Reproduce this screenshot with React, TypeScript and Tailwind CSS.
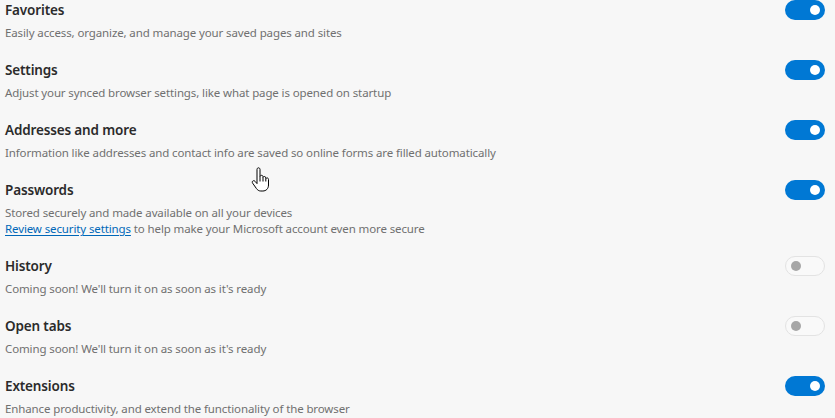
import React from "react";

type Row = { title: string; desc: string; on: boolean; link?: boolean };

const rows: Row[] = [
  { title: "Favorites", desc: "Easily access, organize, and manage your saved pages and sites", on: true },
  { title: "Settings", desc: "Adjust your synced browser settings, like what page is opened on startup", on: true },
  { title: "Addresses and more", desc: "Information like addresses and contact info are saved so online forms are filled automatically", on: true },
  { title: "Passwords", desc: "Stored securely and made available on all your devices", on: true, link: true },
  { title: "History", desc: "Coming soon! We'll turn it on as soon as it's ready", on: false },
  { title: "Open tabs", desc: "Coming soon! We'll turn it on as soon as it's ready", on: false },
  { title: "Extensions", desc: "Enhance productivity, and extend the functionality of the browser", on: true },
];

function Toggle({ on }: { on: boolean }) {
  if (on) {
    return (
      <div className="w-[40px] h-[20px] rounded-full bg-[#0078d4] flex items-center justify-end pr-[5px] shrink-0">
        <div className="w-[10px] h-[10px] rounded-full bg-white" />
      </div>
    );
  }
  return (
    <div className="w-[40px] h-[20px] rounded-full border border-[#e3e3e3] bg-[#f9f9f9] flex items-center pl-[5px] shrink-0">
      <div className="w-[10px] h-[10px] rounded-full bg-[#a6a6a6]" />
    </div>
  );
}

export default function App() {
  return (
    <div
      className="relative w-[835px] h-[418px] bg-[#f7f7f7] overflow-hidden"
      style={{ fontFamily: '"Noto Sans", "Open Sans", sans-serif' }}
    >
      <div className="flex flex-col pl-[5px] pr-[10px]">
        {rows.map((r) => (
          <div key={r.title} className="flex justify-between items-start pb-[19px]">
            <div className="flex flex-col">
              <div className="text-[13.5px] leading-[20px] font-semibold tracking-[-0.15px] text-[#2b2b2b]">{r.title}</div>
              <div className="mt-[5px] text-[11.5px] leading-[16px] tracking-[-0.12px] text-[#707070]">{r.desc}</div>
              {r.link && (
                <div className="text-[11.5px] leading-[16px] tracking-[-0.12px] text-[#707070]">
                  <span className="text-[#0067b8] underline underline-offset-2">Review security settings</span> to help make your Microsoft account even more secure
                </div>
              )}
            </div>
            <Toggle on={r.on} />
          </div>
        ))}
      </div>
      <svg
        className="absolute left-[251px] top-[167px]"
        width="20"
        height="27"
        viewBox="0 0 20 27"
      >
        <path
          d="M6 2.5c0-1 .7-1.7 1.5-1.7S9 1.5 9 2.5v7c.3-.8 1-1.2 1.6-1.2.8 0 1.4.6 1.4 1.5v.6c.3-.6.8-.9 1.4-.9.8 0 1.4.6 1.4 1.4v.8c.3-.5.8-.8 1.3-.8.8 0 1.4.7 1.4 1.5v5.6c0 3.6-2.4 6-5.6 6H9.8c-2 0-3.300-1-4.4-2.5L1.6 16.1c-.5-.7-.4-1.6.2-2.1.7-.5 1.6-.4 2.2.3L6 16.6V2.5z"
          fill="#ffffff"
          stroke="#000000"
          strokeWidth="1"
          strokeLinejoin="round"
        />
        <path d="M9 9.5v5M12 10.4v4.1M14.8 11.9v2.6" stroke="#000" strokeWidth="1" fill="none" />
      </svg>
    </div>
  );
}
